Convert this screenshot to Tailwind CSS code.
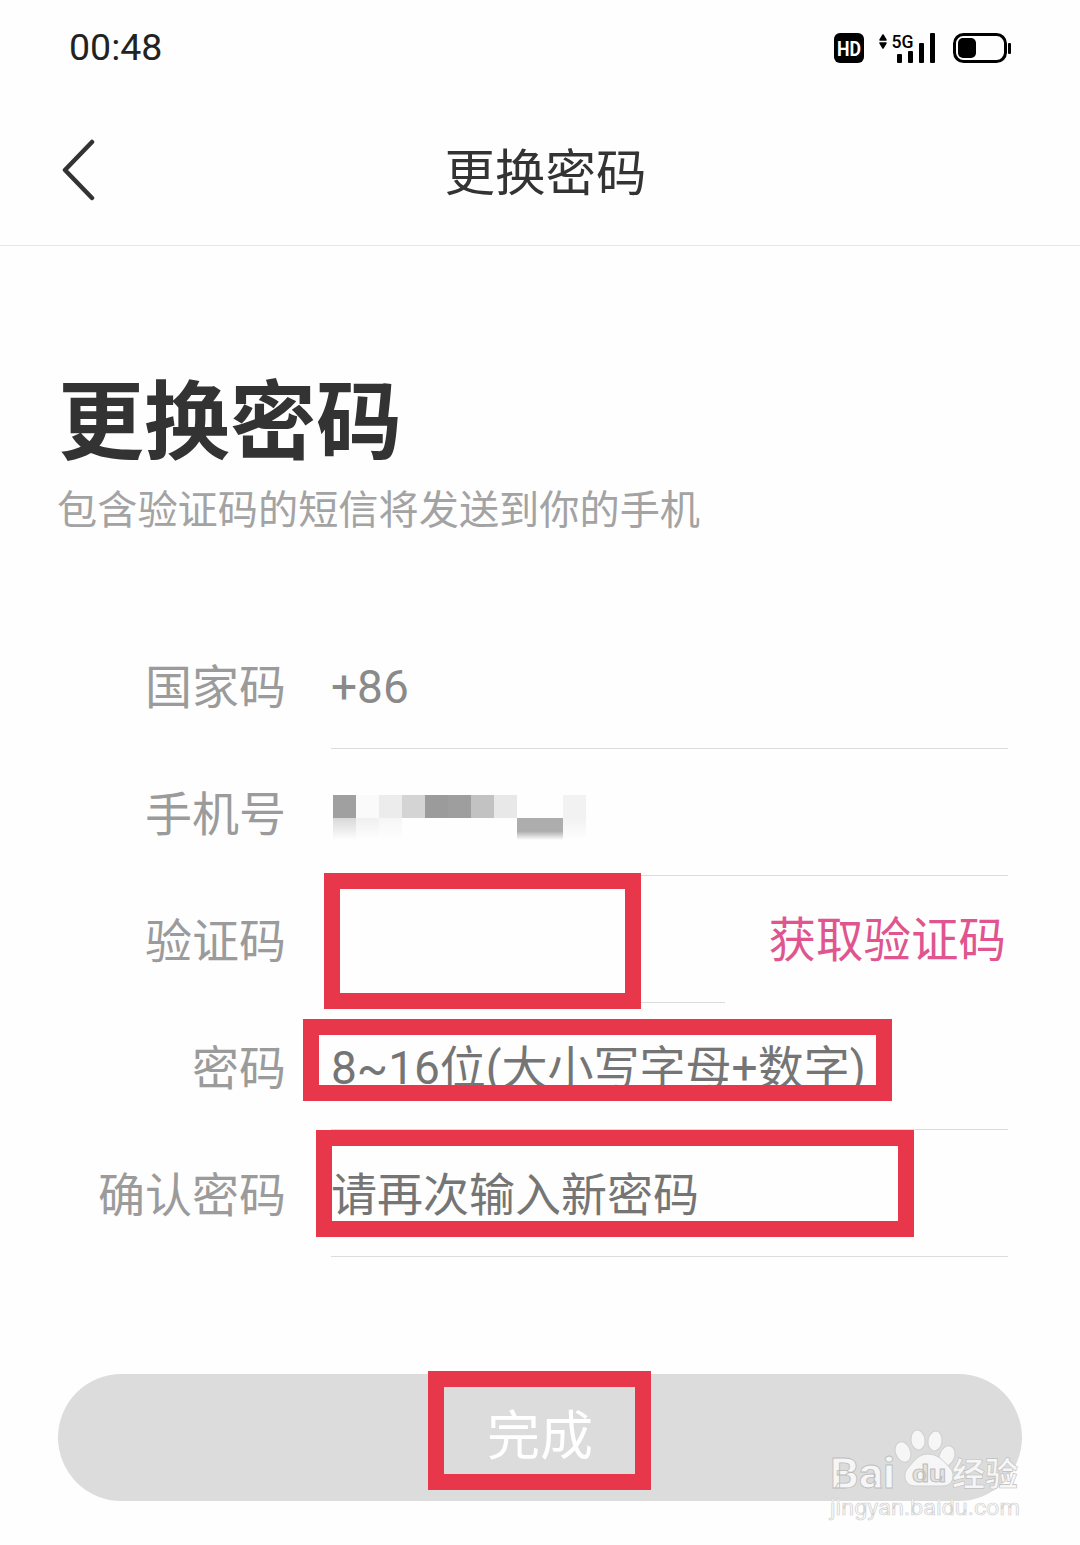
<!DOCTYPE html>
<html lang="zh-CN">
<head>
  <meta charset="UTF-8">
  <meta name="viewport" content="width=device-width, initial-scale=1.0">
  <title>更换密码</title>
  <script src="https://cdn.jsdelivr.net/npm/@tailwindcss/browser@4"></script>
</head>
<body class="bg-[#fefefe]">
  <div class="relative w-[1080px] h-[1545px] overflow-hidden font-['Roboto','Noto_Sans_CJK_SC',sans-serif]">

    <!-- status bar -->
    <div class="h-[96px] flex items-center justify-between pl-[69px] pr-[69px]">
      <span class="text-[37.5px] leading-none text-[#222]">00:48</span>
      <svg width="180" height="34" viewBox="0 0 180 34">
        <rect x="3" y="2" width="30" height="30" rx="6" fill="#000"/>
        <text x="18" y="24.5" text-anchor="middle" font-size="21" font-weight="700" fill="#fff" textLength="24" lengthAdjust="spacingAndGlyphs" font-family="Roboto">HD</text>
        <path d="M49 9l3-5 3 5zM49 12h6l-3 5z" fill="#000" stroke="#000" stroke-width="1.5" stroke-linejoin="round"/>
        <text x="60.5" y="16.5" font-size="19" font-weight="500" fill="#000" textLength="22" lengthAdjust="spacingAndGlyphs" font-family="Roboto">5G</text>
        <rect x="66" y="23" width="5" height="9" rx="1" fill="#000"/>
        <rect x="77" y="20" width="5" height="12" rx="1" fill="#000"/>
        <rect x="88" y="12" width="5" height="20" rx="1" fill="#000"/>
        <rect x="99" y="2" width="5" height="30" rx="1" fill="#000"/>
        <rect x="123.5" y="3.5" width="51" height="27" rx="9" fill="none" stroke="#000" stroke-width="3"/>
        <rect x="127" y="7" width="18" height="20" rx="5" fill="#000"/>
        <rect x="177" y="12" width="3" height="11" rx="1" fill="#000"/>
      </svg>
    </div>

    <!-- nav bar -->
    <div class="relative h-[150px] flex items-center justify-center border-b border-[#e8e8e8]">
      <svg width="36" height="64" viewBox="0 0 36 64" class="absolute left-[61px] top-[43px]">
        <path d="M31 3L4 31l27 28" fill="none" stroke="#333" stroke-width="4.5" stroke-linecap="round" stroke-linejoin="round"/>
      </svg>
      <h2 class="ml-[11px] mt-[7px] text-[50.5px] leading-none text-[#333]">更换密码</h2>
    </div>

    <!-- heading -->
    <div class="pt-[133px] pl-[58px]">
      <h1 class="text-[86px] leading-[90px] font-bold text-[#333]">更换密码</h1>
      <p class="mt-[18px] -ml-[1px] text-[40.2px] leading-[48px] text-[#a3a3a3]">包含验证码的短信将发送到你的手机</p>
    </div>

    <!-- form rows -->
    <div class="mt-[87px] w-[1008px]">
      <div class="flex h-[127px]">
        <div class="w-[286px] flex items-center justify-end pt-[6px] text-[47px] text-[#9b9b9b]">国家码</div>
        <div class="ml-[45px] flex-1 flex items-center pt-[5px] border-b border-[#dcdcdc] text-[46px] text-[#8a8a8a]">+86</div>
      </div>
      <div class="flex h-[127px]">
        <div class="w-[286px] flex items-center justify-end pt-[6px] text-[47px] text-[#9b9b9b]">手机号</div>
        <div class="ml-[47px] flex-1 flex items-start pt-[46px] border-b border-[#dcdcdc]">
          <div class="grid grid-cols-[repeat(11,23px)] grid-rows-[23px_22px]">
            <div class="bg-[#a0a0a0]"></div><div class="bg-[#fafafa]"></div><div class="bg-[#ececec]"></div><div class="bg-[#d4d4d4]"></div><div class="bg-[#9b9b9b]"></div><div class="bg-[#9e9e9e]"></div><div class="bg-[#c2c2c2]"></div><div class="bg-[#e8e8e8]"></div><div></div><div></div><div class="bg-[#f2f2f2]"></div>
            <div class="bg-[linear-gradient(#d8d8d8,#fefefe)]"></div><div class="bg-[linear-gradient(#f0f0f0,#fefefe)]"></div><div class="bg-[linear-gradient(#f6f6f6,#fefefe)]"></div><div></div><div></div><div></div><div></div><div></div><div class="bg-[linear-gradient(#adadad_60%,#fefefe)]"></div><div class="bg-[linear-gradient(#adadad_60%,#fefefe)]"></div><div class="bg-[linear-gradient(#f2f2f2,#fefefe)]"></div>
          </div>
        </div>
      </div>
      <div class="flex h-[127px]">
        <div class="w-[286px] flex items-center justify-end pt-[6px] text-[47px] text-[#9b9b9b]">验证码</div>
        <div class="ml-[45px] flex-1 flex items-center justify-between">
          <div class="w-[394px] h-full border-b border-[#dcdcdc]"></div>
          <span class="text-[47.5px] text-[#e0558f] mr-[2px] pt-[5px]">获取验证码</span>
        </div>
      </div>
      <div class="flex h-[127px]">
        <div class="w-[286px] flex items-center justify-end pt-[6px] text-[47px] text-[#9b9b9b]">密码</div>
        <div class="ml-[45px] flex-1 flex items-center pt-[4px] border-b border-[#dcdcdc] text-[46px] text-[#757575]">8~16位(大小写字母+数字)</div>
      </div>
      <div class="flex h-[127px]">
        <div class="w-[286px] flex items-center justify-end pt-[6px] text-[47px] text-[#9b9b9b]">确认密码</div>
        <div class="ml-[45px] flex-1 flex items-center pt-[4px] border-b border-[#dcdcdc] text-[46px] text-[#757575]">请再次输入新密码</div>
      </div>
    </div>

    <!-- submit -->
    <div class="mt-[117px] mx-[58px] h-[127px] rounded-full bg-[#dcdcdc] flex items-center justify-center text-[53px] text-white">完成</div>

    <!-- red annotation boxes -->
    <div class="absolute left-[324px] top-[873px] w-[317px] h-[136px] border-[16px] border-[#e8364a]"></div>
    <div class="absolute left-[303px] top-[1019px] w-[589px] h-[82px] border-[16px] border-[#e8364a]"></div>
    <div class="absolute left-[316px] top-[1130px] w-[598px] h-[107px] border-[16px] border-[#e8364a]"></div>
    <div class="absolute left-[428px] top-[1371px] w-[223px] h-[119px] border-[16px] border-[#e8364a]"></div>

    <!-- watermark -->
    <svg width="200" height="125" viewBox="0 0 200 125" class="absolute left-[828px] top-[1425px]">
      <g fill="#f6f6f6" stroke="#cfcfcf" stroke-width="1">
        <ellipse cx="90" cy="15" rx="7" ry="10" transform="rotate(-8 90 15)"/>
        <ellipse cx="107" cy="16" rx="7" ry="10" transform="rotate(8 107 16)"/>
        <ellipse cx="75" cy="27" rx="7.5" ry="10.5" transform="rotate(-22 75 27)"/>
        <ellipse cx="119" cy="31" rx="7.5" ry="10.5" transform="rotate(22 119 31)"/>
        <path d="M100 29c-9 0-13 6-20 14-6 7-3 18 7 18h28c10 0 13-11 7-18-7-8-13-14-22-14z"/>
      </g>
      <g font-family="Roboto" font-weight="700" fill="#f6f6f6" stroke="#bdbdbd" stroke-width="0.8">
        <text x="2" y="63" font-size="42" textLength="65" lengthAdjust="spacingAndGlyphs">Bai</text>
        <text x="84" y="57" font-size="24" fill="#e2e2e2" textLength="34" lengthAdjust="spacingAndGlyphs">du</text>
      </g>
      <text x="124" y="61" font-size="33" font-weight="700" fill="#f6f6f6" stroke="#bdbdbd" stroke-width="0.6" textLength="66" lengthAdjust="spacingAndGlyphs" font-family="Noto Sans CJK SC">经验</text>
      <text x="2" y="90" font-size="22" fill="#fbfbfb" stroke="#d2d2d2" stroke-width="0.7" textLength="190" lengthAdjust="spacingAndGlyphs" font-family="Roboto">jingyan.baidu.com</text>
    </svg>
  </div>
</body>
</html>
